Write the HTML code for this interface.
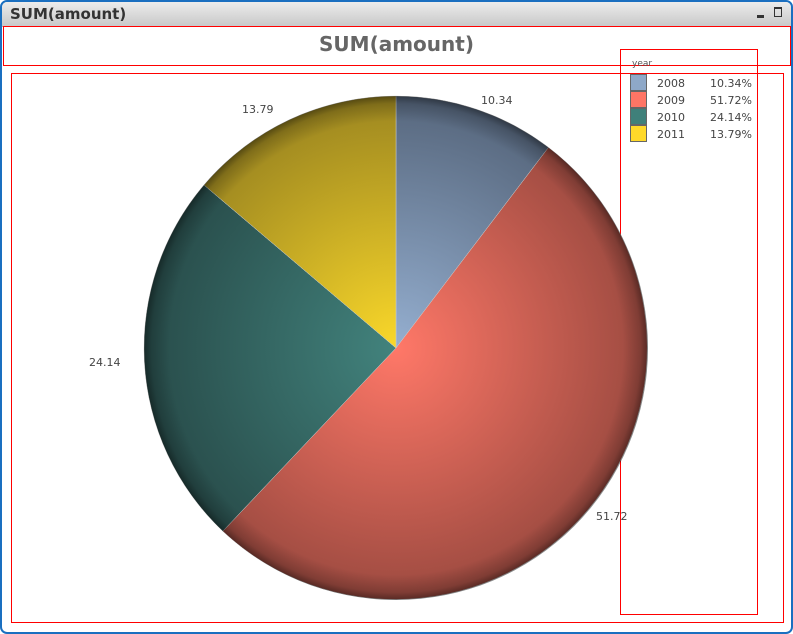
<!DOCTYPE html>
<html><head><style>
body{margin:0;width:793px;height:634px;overflow:hidden;background:#fff;font-family:"DejaVu Sans","Liberation Sans",sans-serif;}
.outer{position:absolute;left:0;top:0;width:789px;height:630px;border:2px solid #1a6fc0;border-radius:7px;overflow:hidden;}
.bar{position:absolute;left:0;top:0;width:789px;height:24px;background:linear-gradient(#ececec,#c9c9c9);border-bottom:1px solid #aaa;}
.bar span{position:absolute;left:8px;top:3px;font-weight:bold;font-size:15px;color:#333;}
.r{position:absolute;border:1px solid #f00;}
</style></head><body>
<div class="outer">
<div class="bar"><span>SUM(amount)</span>
<div style="position:absolute;left:755px;top:13px;width:7px;height:3px;background:#333"></div>
<div style="position:absolute;left:772px;top:5px;width:8px;height:10px;border:1px solid #333;border-top-width:2px;box-sizing:border-box"></div>
</div>
</div>
<div class="r" style="left:3px;top:26px;width:786px;height:38px"></div>
<div style="position:absolute;left:0;width:793px;top:32px;text-align:center;font-weight:bold;font-size:20px;color:#666">SUM(amount)</div>
<div class="r" style="left:11px;top:73px;width:771px;height:548px"></div>
<div class="r" style="left:620px;top:49px;width:136px;height:564px"></div>
<svg style="position:absolute;left:0;top:0" width="793" height="634">
<defs>
<radialGradient id="g1" cx="396" cy="348" r="252" gradientUnits="userSpaceOnUse"><stop offset="0" stop-color="#95afd0"/><stop offset="1" stop-color="#56667c"/></radialGradient>
<radialGradient id="g2" cx="396" cy="348" r="252" gradientUnits="userSpaceOnUse"><stop offset="0" stop-color="#ff7868"/><stop offset="1" stop-color="#9c4a40"/></radialGradient>
<radialGradient id="g3" cx="396" cy="348" r="252" gradientUnits="userSpaceOnUse"><stop offset="0" stop-color="#42837d"/><stop offset="1" stop-color="#284c4a"/></radialGradient>
<radialGradient id="g4" cx="396" cy="348" r="252" gradientUnits="userSpaceOnUse"><stop offset="0" stop-color="#fad82a"/><stop offset="1" stop-color="#9c8620"/></radialGradient>
<radialGradient id="rim" cx="396" cy="348" r="252" gradientUnits="userSpaceOnUse"><stop offset="0.9" stop-color="#000" stop-opacity="0"/><stop offset="0.97" stop-color="#000" stop-opacity="0.2"/><stop offset="1" stop-color="#000" stop-opacity="0.45"/></radialGradient>
</defs>
<path d="M396,348 L396,96 A252,252 0 0 1 548.5,147.4 Z" fill="url(#g1)" stroke="#ccc" stroke-width="0.5"/>
<path d="M396,348 L548.5,147.4 A252,252 0 1 1 222.8,531.2 Z" fill="url(#g2)" stroke="#ccc" stroke-width="0.5"/>
<path d="M396,348 L222.8,531.2 A252,252 0 0 1 204,185 Z" fill="url(#g3)" stroke="#ccc" stroke-width="0.5"/>
<path d="M396,348 L204,185 A252,252 0 0 1 396,96 Z" fill="url(#g4)" stroke="#ccc" stroke-width="0.5"/>
<circle cx="396" cy="348" r="252" fill="url(#rim)"/>
<g font-family="DejaVu Sans,Liberation Sans,sans-serif" font-size="11" fill="#444">
<text x="481" y="104">10.34</text>
<text x="596" y="520">51.72</text>
<text x="89" y="366">24.14</text>
<text x="242" y="113">13.79</text>
<text x="632" y="66" font-size="9" fill="#555">year</text>
<rect x="630.5" y="74.5" width="16" height="16" fill="#8ea8c8" stroke="#666"/>
<rect x="630.5" y="91.5" width="16" height="16" fill="#ff7565" stroke="#666"/>
<rect x="630.5" y="108.5" width="16" height="16" fill="#3f807a" stroke="#666"/>
<rect x="630.5" y="125.5" width="16" height="16" fill="#ffd92a" stroke="#666"/>
<text x="657" y="87">2008</text><text x="752" y="87" text-anchor="end">10.34%</text>
<text x="657" y="104">2009</text><text x="752" y="104" text-anchor="end">51.72%</text>
<text x="657" y="121">2010</text><text x="752" y="121" text-anchor="end">24.14%</text>
<text x="657" y="138">2011</text><text x="752" y="138" text-anchor="end">13.79%</text>
</g>
</svg>
</body></html>
